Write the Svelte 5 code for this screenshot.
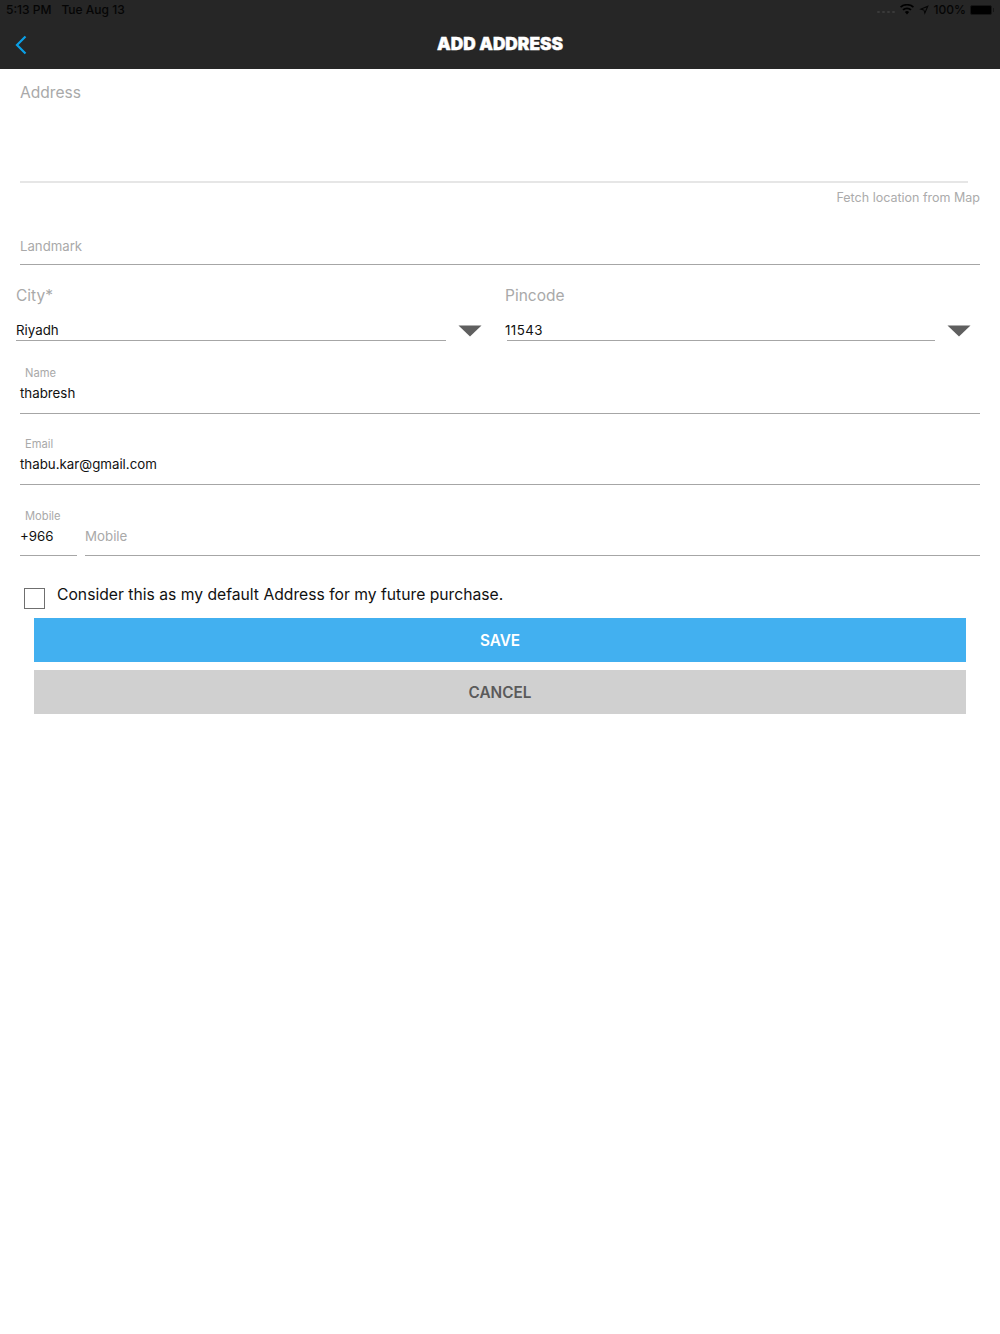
<script>
  const city = { label: 'City*', value: 'Riyadh' };
  const pin = { label: 'Pincode', value: '11543' };
</script>

<div class="page">
  <header class="top">
    <div class="status">
      <div class="status-left"><span>5:13 PM</span><span>Tue Aug 13</span></div>
      <div class="status-right">
        <span class="dots"><i></i><i></i><i></i><i></i></span>
        <svg class="wifi" width="14" height="11" viewBox="0 0 14 11"><path d="M7 10.5 4.9 8a3.2 3.2 0 0 1 4.2 0ZM3.6 6.6 2.4 5.2a7 7 0 0 1 9.2 0l-1.2 1.4a5.2 5.2 0 0 0-6.8 0ZM1.1 3.8 0 2.5a10.6 10.6 0 0 1 14 0l-1.1 1.3a9 9 0 0 0-11.8 0Z" fill="#000"/></svg>
        <svg class="loc" width="10" height="10" viewBox="0 0 10 10"><path d="M9.8.2 5.7 9.8 4.6 5.4.2 4.3Z M7.6 2.4 3.4 4 5.3 4.7 5.9 6.5Z" fill="#050505" fill-rule="evenodd"/></svg>
        <span class="pct">100%</span>
        <span class="battery"></span>
        <span class="nub"></span>
      </div>
    </div>
    <div class="nav">
      <svg class="back" width="12" height="20" viewBox="0 0 12 20"><path d="M10.5 1.5 2 10l8.5 8.5" fill="none" stroke="#0a9fe6" stroke-width="2.2"/></svg>
      <h1>ADD ADDRESS</h1>
    </div>
  </header>

  <main class="form">
    <div class="address">
      <div class="address-label">Address</div>
    </div>
    <div class="fetch">Fetch location from Map</div>

    <div class="landmark">Landmark</div>

    <div class="selects">
      {#each [city, pin] as s, i}
        <div class="select" class:second={i === 1}>
          <div class="select-label">{s.label}</div>
          <div class="select-row">
            <div class="select-value">{s.value}</div>
            <svg class="caret" width="24" height="12" viewBox="0 0 24 12"><path d="M0.5 0.5h23L12 11.5Z" fill="#5f5f5f"/></svg>
          </div>
        </div>
      {/each}
    </div>

    <div class="field first">
      <div class="small">Name</div>
      <div class="value">thabresh</div>
    </div>
    <div class="field">
      <div class="small">Email</div>
      <div class="value">thabu.kar@gmail.com</div>
    </div>
    <div class="mobile">
      <div class="small">Mobile</div>
      <div class="mobile-row">
        <div class="value code">+966</div>
        <div class="value number">Mobile</div>
      </div>
    </div>

    <label class="check">
      <span class="box"></span>
      <span>Consider this as my default Address for my future purchase.</span>
    </label>

    <div class="buttons">
      <button class="save">SAVE</button>
      <button class="cancel">CANCEL</button>
    </div>
  </main>
</div>

<style>
  :global(body) {
    margin: 0;
    background: #fff;
    font-family: Inter, "Liberation Sans", sans-serif;
  }
  .page {
    width: 1000px;
    height: 1334px;
    background: #fff;
    overflow: hidden;
  }
  .top {
    height: 69px;
    background: #262626;
    box-sizing: border-box;
  }
  .status {
    height: 20px;
    display: flex;
    justify-content: space-between;
    align-items: center;
    padding: 0 6px 1px 6px;
    box-sizing: border-box;
    font-size: 12px;
    font-weight: 500;
    color: #050505;
  }
  .status-left {
    display: flex;
    gap: 10px;
  }
  .status-right {
    display: flex;
    align-items: center;
  }
  .dots {
    display: flex;
    gap: 2px;
    margin: 4px 4px 0 0;
  }
  .dots i {
    width: 3px;
    height: 2px;
    border-radius: 1px;
    background: #3a3a3a;
  }
  .wifi {
    margin-left: 1px;
  }
  .loc {
    margin: 0 5px;
  }
  .battery {
    width: 22px;
    height: 10px;
    margin-left: 4px;
    background: #000;
    border-radius: 2px;
    border: 1px solid #161616;
    display: block;
    box-sizing: border-box;
  }
  .nub {
    width: 1px;
    height: 4px;
    margin-left: 1px;
    background: #161616;
    display: block;
  }
  .nav {
    position: relative;
    height: 48px;
    display: flex;
    align-items: center;
    justify-content: center;
  }
  .back {
    position: absolute;
    left: 15px;
    top: 15px;
  }
  h1 {
    margin: 0 0 1px;
    font-size: 17.3px;
    line-height: 20px;
    font-weight: 900;
    color: #fff;
    -webkit-text-stroke: 0.4px #fff;
  }
  .form {
    display: flex;
    flex-direction: column;
  }
  .address {
    margin: 0 32px 0 20px;
    height: 112px;
    border-bottom: 2px solid #e6e6e6;
  }
  .address-label {
    font-size: 15.6px;
    line-height: 20px;
    color: #a9a9a9;
    padding-top: 14px;
  }
  .fetch {
    align-self: flex-end;
    margin: 7px 20px 0 0;
    font-size: 12.5px;
    line-height: 16px;
    color: #ababab;
  }
  .landmark {
    margin: 25px 20px 0;
    height: 33px;
    line-height: 30px;
    font-size: 13.2px;
    color: #a9a9a9;
    border-bottom: 1px solid #a6a6a6;
  }
  .selects {
    display: flex;
    padding: 0 0 0 16px;
    margin-top: 21px;
  }
  .select {
    width: 489px;
  }
  .select-label {
    font-size: 15.5px;
    line-height: 20px;
    color: #a9a9a9;
  }
  .select-row {
    display: flex;
    align-items: flex-start;
    margin-top: 15px;
  }
  .select-value {
    width: 430px;
    height: 20px;
    box-sizing: border-box;
    font-size: 13.3px;
    line-height: 18px;
    color: #111;
    border-bottom: 1px solid #a6a6a6;
  }
  .second .select-value {
    width: 428px;
    margin-left: 2px;
    text-indent: -2px;
    letter-spacing: 0.45px;
  }
  .caret {
    margin: 4px 0 0 11.5px;
  }
  .field {
    margin: 23px 20px 0;
    border-bottom: 1px solid #a6a6a6;
    height: 47px;
  }
  .field.first {
    margin-top: 25px;
  }
  .small {
    font-size: 11.2px;
    line-height: 14px;
    color: #a9a9a9;
    padding-left: 5px;
  }
  .value {
    font-size: 13.3px;
    line-height: 18px;
    margin-top: 4px;
    color: #111;
  }
  .mobile {
    margin: 23px 20px 0;
    padding-top: 1px;
  }
  .mobile-row {
    display: flex;
    gap: 8px;
  }
  .code {
    width: 57px;
    height: 29px;
    box-sizing: border-box;
    border-bottom: 1px solid #a6a6a6;
  }
  .number {
    flex: 1;
    height: 29px;
    box-sizing: border-box;
    border-bottom: 1px solid #a6a6a6;
    color: #a9a9a9;
  }
  .check {
    display: flex;
    align-items: flex-start;
    margin: 29px 0 0 24px;
    font-size: 15.7px;
    line-height: 20px;
    color: #111;
  }
  .box {
    width: 21px;
    height: 21px;
    border: 1px solid #6f6f6f;
    box-sizing: border-box;
    margin: 3px 12px 0 0;
  }
  .buttons {
    display: flex;
    flex-direction: column;
    gap: 8px;
    margin: 9px 34px 0;
  }
  button {
    height: 44px;
    border: 0;
    padding: 0;
    font-family: inherit;
    font-size: 15.3px;
    font-weight: 600;
    display: block;
    width: 100%;
  }
  .save {
    background: #42b0f0;
    color: #fff;
  }
  .cancel {
    background: #d0d0d0;
    color: #5a5a5a;
  }
</style>
